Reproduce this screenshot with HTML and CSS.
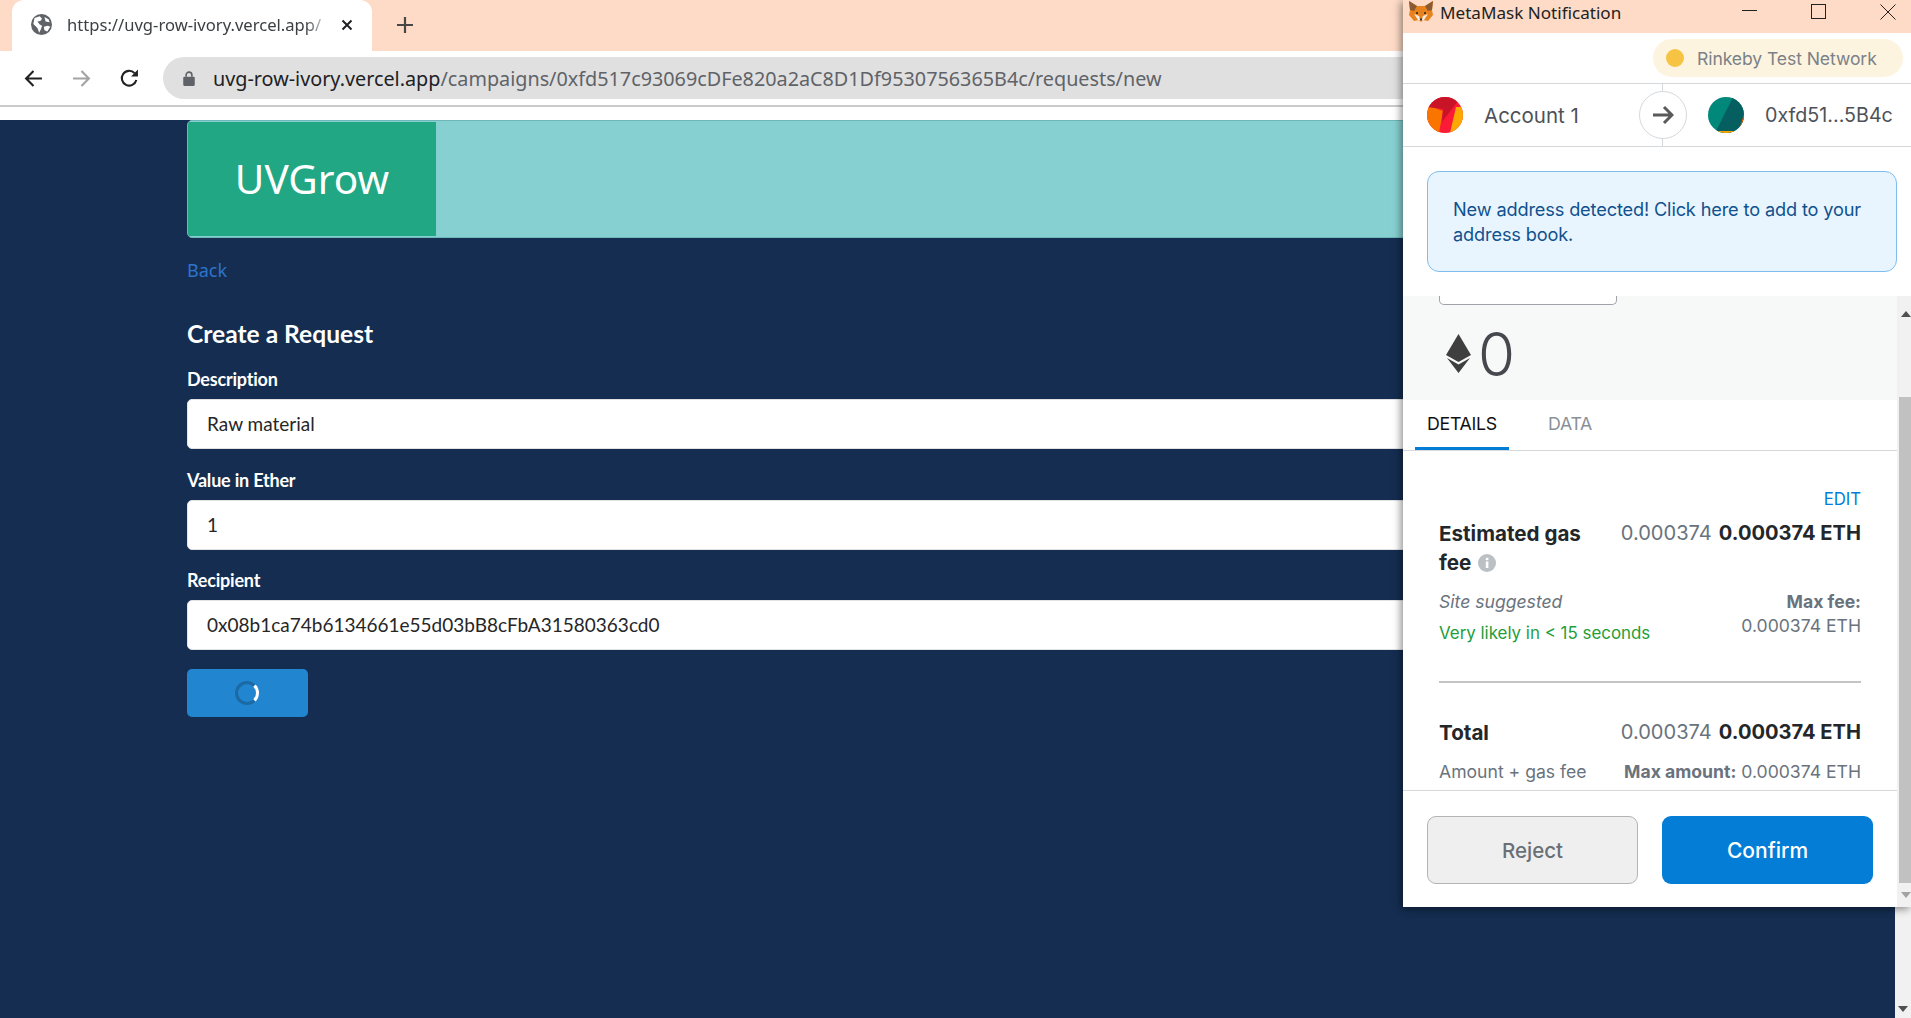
FILE: index.html
```html
<!DOCTYPE html>
<html lang="en">
<head>
<meta charset="utf-8">
<title>UVGrow</title>
<link rel="stylesheet" href="styles.css">
</head>
<body>
<div class="browser">
  <div class="tabstrip">
    <div class="tab">
      <svg class="globe" viewBox="0 0 18 18" width="21" height="21"><circle cx="9" cy="9" r="9" fill="#5f6368"/><path d="M3 3.5 7.5 2 9.5 4 8 6 5.5 6.5 7.5 9 9.5 10 8.5 13 7 16 5.5 12 2 8.5Z M11 11 14.5 10 16.5 11 14 15 11.5 14Z M11.5 2.5 15 4.5 16 7 12.5 6.5Z" fill="#fff"/></svg>
      <span class="tab-title">https://uvg-row-ivory.vercel.app/</span>
      <svg class="tab-close" viewBox="0 0 12 12" width="12" height="12"><path d="M1.5 1.5 10.5 10.5M10.5 1.5 1.5 10.5" stroke="#202124" stroke-width="2"/></svg>
    </div>
    <svg class="newtab" viewBox="0 0 18 18" width="18" height="18"><path d="M9 1V17M1 9H17" stroke="#474747" stroke-width="2.2"/></svg>
  </div>
  <div class="toolbar">
    <svg class="nav back" viewBox="0 0 18 18" width="19" height="19"><path d="M17 9H2M9 2 2 9 9 16" fill="none" stroke="#222" stroke-width="2"/></svg>
    <svg class="nav forward" viewBox="0 0 18 18" width="19" height="19"><path d="M1 9H16M9 2 16 9 9 16" fill="none" stroke="#a3a3a3" stroke-width="2"/></svg>
    <svg class="nav reload" viewBox="0 0 18 18" width="19" height="19"><path d="M15.5 10.5A7 7 0 1 1 13.8 3.9" fill="none" stroke="#222" stroke-width="2"/><path d="M10.5 7H17V0.5Z" fill="#222"/></svg>
    <div class="omnibox">
      <svg class="lock" viewBox="0 0 10 13" width="12" height="15"><path d="M2.5 5V3.5a2.5 2.5 0 0 1 5 0V5" fill="none" stroke="#5f6368" stroke-width="1.4"/><rect y="5" width="10" height="8" rx="1" fill="#5f6368"/></svg>
      <span class="host">uvg-row-ivory.vercel.app</span><span class="url-path">/campaigns/0xfd517c93069cDFe820a2aC8D1Df9530756365B4c/requests/new</span>
    </div>
  </div>
  <div class="toolbar-rule"></div>
  <main class="page">
    <div class="container">
      <nav class="menu"><a class="brand">UVGrow</a></nav>
      <a class="back-link">Back</a>
      <h3 class="form-title">Create a Request</h3>
      <form class="form">
        <div class="field"><label>Description</label><div class="input">Raw material</div></div>
        <div class="field"><label>Value in Ether</label><div class="input">1</div></div>
        <div class="field"><label>Recipient</label><div class="input">0x08b1ca74b6134661e55d03bB8cFbA31580363cd0</div></div>
        <div class="submit"><span class="spinner"></span></div>
      </form>
    </div>
  </main>
</div>
<div class="page-scrollbar"><svg viewBox="0 0 10 6" width="10" height="6"><path d="M0 0H10L5 6Z" fill="#505050"/></svg></div>

<section class="popup">
  <header class="titlebar">
    <svg class="fox" viewBox="0 0 24 22" width="24" height="22"><path d="M0 0 8 5H16L24 0 23 9 24 14 19 20 14 19 12 21 10 19 5 20 0 14 1 9Z" fill="#e8821e"/><path d="M0 0 8 5 5 10 1 9ZM24 0 16 5 19 10 23 9Z" fill="#8a5a33"/><path d="M5 13 10 15 12 20 14 15 19 13 15 19H9Z" fill="#f5ece1"/><path d="M10.5 17.5H13.5L12 20Z" fill="#222"/><circle cx="8" cy="12" r="1" fill="#222"/><circle cx="16" cy="12" r="1" fill="#222"/></svg>
    <span class="window-title">MetaMask Notification</span>
    <svg class="win minimize" viewBox="0 0 16 16" width="16" height="16"><path d="M0 7.5H15" stroke="#222"/></svg>
    <svg class="win maximize" viewBox="0 0 16 16" width="16" height="16"><rect x="0.5" y="0.5" width="14" height="14" fill="none" stroke="#222"/></svg>
    <svg class="win winclose" viewBox="0 0 16 16" width="16" height="16"><path d="M0.5 0.5 15.5 15.5M15.5 0.5 0.5 15.5" stroke="#222"/></svg>
  </header>
  <div class="network-bar"><div class="network"><span class="dot"></span>Rinkeby Test Network</div></div>
  <div class="accounts">
    <div class="account from">
      <svg class="avatar" viewBox="0 0 36 36" width="36" height="36"><defs><clipPath id="c1"><circle cx="18" cy="18" r="18"/></clipPath></defs><g clip-path="url(#c1)"><rect width="36" height="36" fill="#fc1b36"/><path d="M0 8 16 14 12 36H0Z" fill="#f97500"/><path d="M0 0H34L15 25 16 12 0 10Z" fill="#c91428"/><path d="M29 10 36 10V36H23Z" fill="#fba800"/></g></svg>
      <span>Account 1</span>
    </div>
    <div class="arrow-circle"><svg viewBox="0 0 22 22" width="22" height="22"><path d="M1 11H19M12 3 20 11 12 19" fill="none" stroke="#5a5a5a" stroke-width="3"/></svg></div>
    <div class="account to">
      <svg class="avatar" viewBox="0 0 36 36" width="36" height="36"><defs><clipPath id="c2"><circle cx="18" cy="18" r="18"/></clipPath></defs><g clip-path="url(#c2)"><rect width="36" height="36" fill="#00897b"/><path d="M25 0H36V36H7Z" fill="#055f60"/><path d="M36 17 V36H30Z" fill="#f25c05"/><path d="M7 34H36V36H7Z" fill="#f9a602"/></g></svg>
      <span>0xfd51...5B4c</span>
    </div>
  </div>
  <div class="alert-zone">
    <div class="alert">New address detected! Click here to add to your address book.</div>
  </div>
  <div class="scroll-area">
    <div class="scroll-content">
      <div class="summary">
        <div class="method-chip"></div>
        <div class="amount">
          <svg class="eth" viewBox="0 0 25 39" width="25" height="39"><path d="M12.5 0 25 21 12.5 28 0 21Z" fill="#3f3f3f"/><path d="M12.5 30.5 24 24 12.5 39 1 24Z" fill="#3f3f3f"/></svg>
          <span>0</span>
        </div>
      </div>
      <div class="tabs">
        <span class="mm-tab active">DETAILS</span>
        <span class="mm-tab">DATA</span>
      </div>
      <div class="details">
        <div class="edit">EDIT</div>
        <div class="row gas-row">
          <div class="row-label">Estimated gas fee <svg class="info" viewBox="0 0 18 18" width="18" height="18"><circle cx="9" cy="9" r="9" fill="#bbc0c5"/><rect x="7.8" y="7.5" width="2.6" height="6.5" fill="#fff"/><rect x="7.8" y="3.8" width="2.6" height="2.4" fill="#fff"/></svg></div>
          <div class="values"><span class="muted">0.000374</span><b>0.000374 ETH</b></div>
        </div>
        <div class="row sub-row">
          <div>
            <div class="site">Site suggested</div>
            <div class="likely">Very likely in &lt; 15 seconds</div>
          </div>
          <div class="max-fee">
            <b>Max fee:</b>
            <div>0.000374 ETH</div>
          </div>
        </div>
        <hr class="divider">
        <div class="row total-row">
          <div class="row-label">Total</div>
          <div class="values"><span class="muted">0.000374</span><b>0.000374 ETH</b></div>
        </div>
        <div class="row amount-row">
          <div>Amount + gas fee</div>
          <div><b>Max amount:</b> 0.000374 ETH</div>
        </div>
      </div>
      <footer class="actions">
        <div class="btn reject">Reject</div>
        <div class="btn confirm">Confirm</div>
      </footer>
    </div>
    <div class="mm-scrollbar">
      <svg class="sb-up" viewBox="0 0 10 6" width="10" height="6"><path d="M0 6H10L5 0Z" fill="#505050"/></svg>
      <div class="thumb"></div>
      <svg class="sb-down" viewBox="0 0 10 6" width="10" height="6"><path d="M0 0H10L5 6Z" fill="#a3a3a3"/></svg>
    </div>
  </div>
</section>
</body>
</html>
```

FILE: styles.css
```css
* { box-sizing: border-box; }
html, body { margin: 0; height: 100%; overflow: hidden; }
body { width: 1911px; height: 1018px; position: relative; font-family: "Noto Sans", sans-serif; background: #142d50; }

.browser { display: flex; flex-direction: column; height: 1018px; }
.tabstrip { height: 51px; background: #fddbc7; display: flex; align-items: center; padding-left: 12px; flex: none; }
.tab { width: 360px; height: 51px; background: #fff; border-radius: 12px 12px 0 0; display: flex; align-items: center; padding: 0 0 2px 19px; align-self: flex-end; }
.globe { flex: none; }
.tab-title { margin-left: 15px; width: 264px; white-space: nowrap; font-size: 16.6px; color: #3c4043; -webkit-mask-image: linear-gradient(to right, #000 90%, transparent 100%); mask-image: linear-gradient(to right, #000 90%, transparent 100%); }
.tab-close { margin-left: 10px; flex: none; }
.newtab { margin-left: 24px; margin-bottom: 2px; }

.toolbar { height: 54px; background: #fff; display: flex; align-items: center; flex: none; padding-left: 24px; }
.nav { flex: none; }
.forward { margin-left: 29px; }
.reload { margin-left: 29px; }
.omnibox { margin-left: 24px; flex: 1; height: 42px; background: #e0e0e0; border-radius: 21px 0 0 21px; display: flex; align-items: center; padding-left: 20px; font-size: 19.8px; white-space: nowrap; }
.lock { margin-right: 18px; flex: none; }
.host { color: #202124; }
.url-path { color: #5f6368; }
.toolbar-rule { height: 15px; background: #fff; border-top: 2px solid #cbcbcb; flex: none; }

.page { flex: 1; background: #142d50; padding-left: 187px; }
.container { width: 1537px; }
.menu { height: 118px; background: #87d0d2; border: 1px solid #6fb6b8; border-radius: 5px; display: flex; overflow: hidden; }
.brand { width: 248px; margin: 1px 0; background: #21a783; color: #fff; font-size: 40.5px; display: flex; align-items: center; justify-content: center; padding-bottom: 2px; }
.back-link { display: block; margin-top: 19px; color: #2f74cb; font-size: 18px; line-height: 26px; height: 26px; }
.form-title { margin: 36px 0 0; color: #fff; font: 700 24.6px/30px Lato, sans-serif; }
.form { margin-top: 20px; }
.field { margin-bottom: 20.5px; }
.field:nth-child(3) { margin-bottom: 19px; }
.field label { display: block; color: #fff; font: 700 18px/21px Lato, sans-serif; letter-spacing: -0.2px; height: 30px; }
.input { height: 50px; background: #fff; border: 1px solid #e3e3e3; border-radius: 5px; padding: 0 0 1px 19px; display: flex; align-items: center; font: 400 19px Lato, sans-serif; color: #262626; }
.submit { width: 121px; height: 48px; background: #2185d0; border-radius: 5px; display: flex; align-items: center; justify-content: center; }
.spinner { width: 24px; height: 24px; border-radius: 50%; border: 3px solid #1b6aa6; border-right-color: #fff; margin-right: 1px; }

.page-scrollbar { position: absolute; right: 0; top: 907px; width: 16px; height: 111px; background: #f1f1f1; display: flex; align-items: flex-end; justify-content: center; padding-bottom: 6px; }

.popup { position: absolute; left: 1403px; top: 0; width: 508px; height: 907px; background: #fff; display: flex; flex-direction: column; box-shadow: -2px 2px 8px rgba(0, 0, 0, 0.45); font-family: Inter, sans-serif; }
.titlebar { height: 33px; background: #fddbc7; display: flex; align-items: center; flex: none; padding-left: 6px; position: relative; }
.fox { flex: none; margin-bottom: 9px; }
.window-title { margin-left: 7px; font: 400 17.1px "Noto Sans", sans-serif; color: #222; margin-bottom: 9px; }
.win { margin-bottom: 12px; flex: none; }
.minimize { margin-left: auto; }
.maximize { margin-left: 53px; margin-bottom: 9px; }
.winclose { margin-left: 53px; margin-right: 15px; margin-bottom: 9px; }
.network-bar { height: 51px; border-bottom: 1px solid #d6d9dc; display: flex; justify-content: flex-end; padding: 6px 8px 0 0; flex: none; }
.network { width: 250px; height: 38px; background: #fdf4e0; border-radius: 19px; display: flex; align-items: center; padding-left: 13px; font-size: 17.6px; color: #7b8188; letter-spacing: -0.1px; white-space: nowrap; }
.dot { width: 18px; height: 18px; border-radius: 50%; background: #f6c343; margin-right: 13px; flex: none; }
.accounts { height: 63px; border-bottom: 1px solid #d6d9dc; display: flex; align-items: center; padding-left: 24px; position: relative; flex: none; color: #4e5257; font-size: 20.5px; }
.accounts::before { content: ""; position: absolute; left: 259px; top: 0; bottom: 0; width: 1px; background: #d6d9dc; }
.account { display: flex; align-items: center; }
.from { width: 212px; }
.from span { margin-left: 21px; }
.to { margin-left: 21px; }
.to span { margin-left: 21px; font-size: 19.7px; white-space: nowrap; }
.arrow-circle { width: 48px; height: 48px; border-radius: 50%; background: #fff; border: 1px solid #d6d9dc; display: flex; align-items: center; justify-content: center; position: relative; }
.alert-zone { height: 149px; padding: 24px 14px 0 24px; flex: none; }
.alert { height: 101px; background: #e9f5fe; border: 1px solid #7ebdee; border-radius: 12px; padding: 25px 20px 0 25px; font-size: 18.2px; line-height: 25px; color: #10518e; letter-spacing: -0.15px; }
.scroll-area { flex: 1; display: flex; min-height: 0; }
.scroll-content { flex: 1; min-width: 0; display: flex; flex-direction: column; }
.summary { height: 104px; background: #f7f9f9; padding-left: 36px; flex: none; }
.method-chip { width: 178px; height: 9px; background: #fff; border: 1px solid #9fa3a8; border-top: 0; border-radius: 0 0 5px 5px; }
.amount { display: flex; align-items: center; margin-top: 23.5px; margin-left: 7px; color: #45484c; font-size: 60px; line-height: 50px; font-weight: 300; }
.eth { flex: none; margin-right: 7px; }
.tabs { height: 51px; border-bottom: 1px solid #d6d9dc; display: flex; padding-left: 12px; flex: none; }
.mm-tab { line-height: 47px; height: 50px; font-size: 17.8px; color: #8a9098; letter-spacing: -0.3px; }
.mm-tab.active { color: #111; border-bottom: 3px solid #037dd6; width: 94px; padding-left: 12px; margin-right: 39px; white-space: nowrap; }
.details { flex: 1; padding: 38px 36px 0; font-size: 16px; color: #6a737d; overflow: hidden; min-height: 0; }
.edit { text-align: right; color: #037dd6; font-size: 16.8px; line-height: 21px; letter-spacing: -0.1px; margin-bottom: 1px; }
.row { display: flex; justify-content: space-between; }
.row b { font-weight: 700; }
.row-label { font-size: 20.6px; font-weight: 700; color: #24272a; line-height: 29px; }
.gas-row { margin-top: 9px; height: 73.5px; }
.gas-row .row-label { width: 150px; }
.info { vertical-align: -2px; margin-left: 2px; }
.values { font-size: 20.1px; line-height: 29px; white-space: nowrap; display: flex; gap: 7px; }
.values b { color: #24272a; }
.muted { color: #6a737d; }
.sub-row { height: 88.5px; font-size: 17.6px; }
.site { font-style: italic; line-height: 24px; margin-top: -3px; }
.likely { color: #1f9e3a; line-height: 24px; margin-top: 7px; font-size: 16.9px; }
.max-fee { text-align: right; line-height: 24px; margin-top: -3px; }
.max-fee b { display: block; }
.divider { margin: 0; border: 0; border-top: 2px solid #c4c4c4; }
.total-row { margin-top: 35px; }
.amount-row { margin-top: 13px; font-size: 17.6px; line-height: 24px; white-space: nowrap; }
.actions { height: 117px; border-top: 1px solid #d6d9dc; display: flex; padding: 25px 0 0 24px; flex: none; }
.btn { height: 68px; border-radius: 9px; display: flex; align-items: center; justify-content: center; font-weight: 500; }
.reject { width: 211px; background: #efefef; border: 1px solid #b4b4b4; color: #6a6f75; font-size: 20.5px; }
.confirm { width: 211px; margin-left: 24px; background: #037dd6; color: #fff; font-size: 21px; }
.mm-scrollbar { width: 14px; flex: none; background: #f1f1f1; position: relative; }
.sb-up { position: absolute; left: 4px; top: 15px; }
.sb-down { position: absolute; left: 4px; bottom: 9px; }
.thumb { position: absolute; left: 2px; right: 0; top: 101px; height: 486px; background: #c1c1c1; }
```
